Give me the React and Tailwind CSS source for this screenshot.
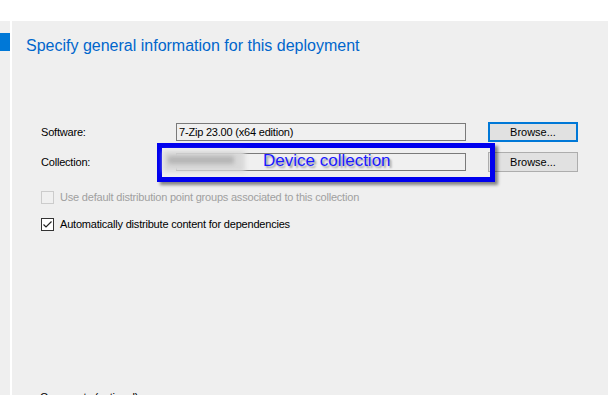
const font = { fontFamily: '"Liberation Sans", Arial, sans-serif' };

const TextBox = ({ children }) => (
  <div className="h-[18px] w-[290px] border border-[#7a7a7a] bg-[#f0f0f0] px-[2px] text-[11px] leading-[16px] tracking-[-0.2px] text-black">
    {children}
  </div>
);

const BrowseButton = ({ focused }) => (
  <div
    className={
      focused
        ? "ml-[22px] flex h-[20px] w-[90px] items-center justify-center border-2 border-[#0078d7] bg-[#e1e1e1] text-[11px] text-black"
        : "ml-[22px] flex h-[20px] w-[90px] items-center justify-center border border-[#adadad] bg-[#e1e1e1] text-[11px] text-black"
    }
  >
    Browse...
  </div>
);

const Checkbox = ({ checked, disabled, label }) => (
  <div className="flex h-[18px] items-center">
    <div
      className={
        disabled
          ? "h-[13px] w-[13px] border border-[#cccccc] bg-[#f0f0f0]"
          : "flex h-[13px] w-[13px] items-center justify-center border border-[#333333] bg-white"
      }
    >
      {checked && (
        <svg width="11" height="11" viewBox="0 0 11 11">
          <path d="M1.5 5.5 L4 8 L9.5 2.5" fill="none" stroke="#222" strokeWidth="1.2" />
        </svg>
      )}
    </div>
    <span
      className={
        disabled
          ? "ml-[6px] text-[11px] tracking-[-0.2px] text-[#a0a0a0]"
          : "ml-[6px] text-[11px] tracking-[-0.2px] text-black"
      }
    >
      {label}
    </span>
  </div>
);

export default function App() {
  return (
    <div className="flex h-[395px] w-[608px] flex-col overflow-hidden bg-white" style={font}>
      <div className="h-[21px] shrink-0 bg-white" />
      <div className="flex flex-1 bg-[#efefef]">
        {/* nav strip */}
        <div className="w-[10px] shrink-0">
          <div className="mt-[12px] h-[18px] bg-[#0078d7]" />
        </div>
        <div className="w-[2px] shrink-0 bg-white" />

        {/* page */}
        <div className="flex-1 pl-[14px] pt-[16px]">
          <h1 className="text-[16px] leading-[18px] text-[#0066cc]">
            Specify general information for this deployment
          </h1>

          <div className="relative ml-[15px] mt-[67px]">
            <div className="flex items-center">
              <span className="w-[135px] text-[11px] tracking-[-0.2px] text-black">Software:</span>
              <TextBox>7-Zip 23.00 (x64 edition)</TextBox>
              <BrowseButton focused />
            </div>
            <div className="mt-[10px] flex items-center">
              <span className="w-[135px] text-[11px] tracking-[-0.2px] text-black">Collection:</span>
              <TextBox />
              <BrowseButton />
            </div>

            {/* highlight overlay */}
            <div className="absolute left-[116px] top-[21px] h-[39px] w-[338px] border-[5px] border-[#0000ee] shadow-[3px_3px_3px_rgba(0,0,0,0.45)]">
              <div className="absolute left-[1px] top-[3px] h-[21px] w-[82px] bg-[#d9d9d9] blur-[2px]" />
              <div className="absolute left-[6px] top-[8px] h-[8px] w-[66px] bg-[#b5b5b5] blur-[2px]" />
              <span className="absolute left-[101px] top-[3px] text-[17px] leading-[20px] text-[#1a1aff] [text-shadow:2px_2px_2px_rgba(0,0,0,0.35)]">
                Device collection
              </span>
            </div>

            <div className="mt-[16px]">
              <Checkbox disabled label="Use default distribution point groups associated to this collection" />
            </div>
            <div className="mt-[9px]">
              <Checkbox checked label="Automatically distribute content for dependencies" />
            </div>
          </div>

          <div className="ml-[14px] mt-[156px] text-[11px] tracking-[-0.2px] text-black">Comments (optional):</div>
        </div>
      </div>
    </div>
  );
}
